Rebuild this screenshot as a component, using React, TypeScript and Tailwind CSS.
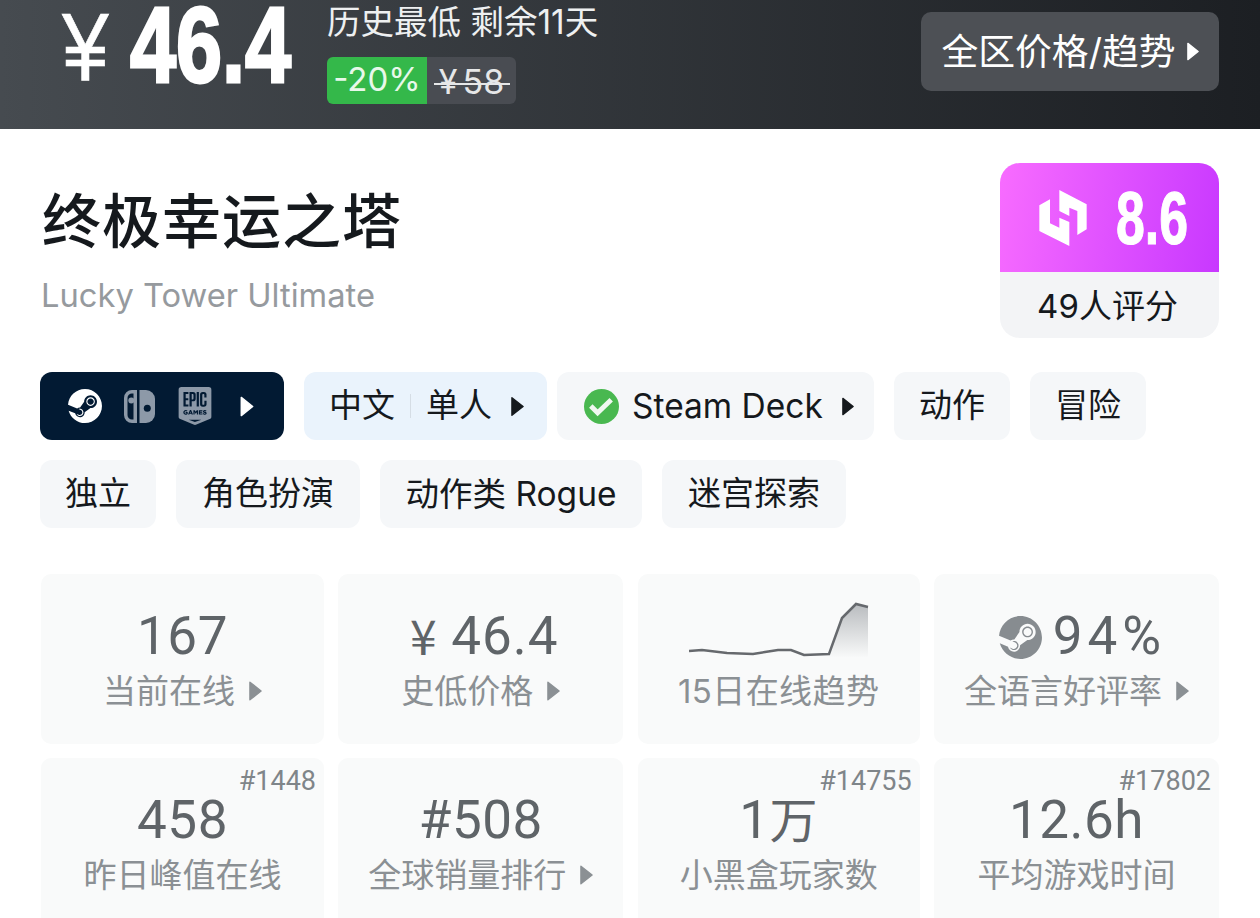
import React from "react";
import { SiSteam, SiEpicgames } from "react-icons/si";

const sans = "font-['Inter','Noto_Sans_CJK_SC',sans-serif]";
const num = "font-['Roboto','Noto_Sans_CJK_SC',sans-serif]";

function Tri({ className = "" }: { className?: string }) {
  return (
    <svg viewBox="0 0 14 22" className={className} fill="currentColor">
      <path d="M1 1.5 L13 11 L1 20.5 Z" stroke="currentColor" strokeWidth="1.5" strokeLinejoin="round" />
    </svg>
  );
}

function Tag({ children, width }: { children: React.ReactNode; width: string }) {
  return (
    <div className={`${width} h-[68px] flex items-center justify-center rounded-[12px] bg-[#f5f7f9] text-[33px] text-[#15191d]`}>
      {children}
    </div>
  );
}

function Card({
  value,
  label,
  arrow,
  rank,
  icon,
  gap = "gap-[14px]",
}: {
  value?: React.ReactNode;
  label: string;
  arrow?: boolean;
  rank?: string;
  icon?: React.ReactNode;
  gap?: string;
}) {
  return (
    <div className="relative h-[170px] rounded-[10px] bg-[#f9fafa] flex flex-col items-center pt-[30px]">
      {rank && <div className={`${num} absolute top-[6px] right-[8px] text-[27px] leading-[34px] text-[#7f8589]`}>{rank}</div>}
      <div className={`${num} ${gap} h-[66px] flex items-center text-[53px] text-[#5f6468] tracking-[0.5px]`}>
        {icon}
        {value}
      </div>
      <div className="flex items-center gap-[14px] text-[33px] leading-[44px] text-[#8b9094] mt-[-1px]">
        <span>{label}</span>
        {arrow && <Tri className="w-[13px] h-[22px] text-[#8b9094]" />}
      </div>
    </div>
  );
}

export default function App() {
  return (
    <div className={`${sans} w-[1260px] h-[918px] overflow-hidden bg-white`}>
      <header className="h-[129px] bg-gradient-to-r from-[#464b50] to-[#1c1f23] flex items-start pl-[62px] pr-[41px]">
        <span className="block w-[44px] mt-[12px] text-[80px] leading-[72px] text-white font-['Liberation_Sans'] origin-left scale-x-[1.05] scale-y-[1.2] [-webkit-text-stroke:0.5px_white]">
          ¥
        </span>
        <span className="block ml-[24px] w-[162px] mt-[1px] text-[72px] leading-[86px] font-bold text-white font-['Liberation_Sans'] origin-left scale-x-[1.15] scale-y-[1.5] whitespace-nowrap [-webkit-text-stroke:2px_white]">
          46.4
        </span>
        <div className="ml-[35px] flex flex-col items-start">
          <div className="text-[33.5px] leading-[40px] text-[#eef0f1] mt-[2px]">历史最低 剩余11天</div>
          <div className="flex h-[47px] mt-[15px] rounded-[6px] overflow-hidden text-[33px] leading-[44px]">
            <div className="w-[100px] bg-[#34b84a] text-[#e8f8ea] text-center">-20%</div>
            <div className="relative w-[89px] bg-[#494c52] text-[#e6e7e8] text-[34px] flex items-center justify-center gap-[5px] pt-[3px]">
              <span>¥</span>
              <span>58</span>
              <div className="absolute left-[7px] right-[6px] top-[26px] h-[2px] bg-[#e6e7e8]" />
            </div>
          </div>
        </div>
        <div className="ml-auto mt-[12px] w-[298px] h-[79px] rounded-[10px] bg-[#4d5055] flex items-center justify-center gap-[11px] text-[36.8px] text-white">
          <span>全区价格/趋势</span>
          <Tri className="w-[12px] h-[21px]" />
        </div>
      </header>

      <main className="pl-[40px] pr-[41px]">
        <section className="flex items-start justify-between pt-[34px]">
          <div className="pl-[2px]">
            <h1 className="text-[59px] leading-[72px] mt-[23px] font-medium text-[#15191d] tracking-[1px]">终极幸运之塔</h1>
            <p className="text-[32.7px] leading-[40px] mt-[17px] ml-[-1px] text-[#969a9e]">Lucky Tower Ultimate</p>
          </div>
          <div className="w-[219px] h-[175px] rounded-[20px] overflow-hidden bg-[#f3f4f6] flex flex-col">
            <div className="h-[109px] bg-[linear-gradient(100deg,#f86cff,#c838ff)] flex items-center justify-center gap-[29px] pl-[7px] text-white">
              <svg viewBox="28 22 142 168" className="w-[48px] h-[56px]" fill="#fff">
                <path d="M28 68 L60 50 L60 122 L88 135 L88 105 L118 118 L118 190 L28 145 Z" />
                <path d="M88 22 L170 65 L170 140 L142 157 L142 85 L118 75 L118 100 L88 85 Z" />
              </svg>
              <span className="block w-[72px] text-[64px] leading-[72px] font-bold font-['Liberation_Sans'] origin-left scale-x-[0.81] scale-y-[1.16] whitespace-nowrap [-webkit-text-stroke:1px_white]">
                8.6
              </span>
            </div>
            <div className="flex-1 flex items-center justify-center pt-[3px] pr-[4px] text-[33px] text-[#15191d]">49人评分</div>
          </div>
        </section>

        <section className="mt-[34px] flex flex-wrap gap-x-[20px] gap-y-[20px]">
          <div className="h-[68px] w-[244px] rounded-[12px] bg-[#021a33] flex items-center pl-[28px] text-white">
            <SiSteam className="w-[34px] h-[34px]" />
            <svg viewBox="0 0 31 33" className="w-[31px] h-[33px] ml-[22px] text-[#8d99a8]">
              <path d="M8 1.75 H11.25 V31.25 H8 A6.25 6.25 0 0 1 1.75 25 V8 A6.25 6.25 0 0 1 8 1.75 Z" fill="none" stroke="currentColor" strokeWidth="3.5" />
              <circle cx="7.3" cy="10.5" r="3" fill="currentColor" />
              <path d="M15.5 0 H22 A9 9 0 0 1 31 9 V24 A9 9 0 0 1 22 33 H15.5 Z" fill="currentColor" />
              <circle cx="23.3" cy="18.3" r="3.5" fill="#021a33" />
            </svg>
            <SiEpicgames className="w-[38px] h-[38px] ml-[21px] text-[#8d99a8]" />
            <Tri className="w-[14px] h-[21px] ml-[26px]" />
          </div>
          <div className="h-[68px] w-[243px] rounded-[12px] bg-[#eaf3fc] flex items-center pl-[25px] text-[33px] text-[#15191d]">
            <span>中文</span>
            <span className="w-[1px] h-[24px] bg-[#d5dde5] mx-[15px]" />
            <span>单人</span>
            <Tri className="w-[13px] h-[21px] ml-[19px]" />
          </div>
          <div className="h-[68px] w-[317px] ml-[-10px] rounded-[12px] bg-[#f5f7f9] flex items-center pl-[27px] text-[33.5px] text-[#15191d]">
            <svg viewBox="0 0 36 36" className="w-[35px] h-[35px]">
              <circle cx="18" cy="18" r="18" fill="#49b850" />
              <path d="M7 17.5 L14 24.5 L28 11" fill="none" stroke="#f0f8f0" strokeWidth="5" />
            </svg>
            <span className="ml-[13px]">Steam Deck</span>
            <Tri className="w-[12px] h-[21px] ml-[19px]" />
          </div>
          <Tag width="w-[116px]">动作</Tag>
          <Tag width="w-[116px]">冒险</Tag>
          <Tag width="w-[116px]">独立</Tag>
          <Tag width="w-[184px]">角色扮演</Tag>
          <Tag width="w-[262px]">
            <span className="text-[33.5px]">动作类 Rogue</span>
          </Tag>
          <Tag width="w-[184px]">迷宫探索</Tag>
        </section>

        <section className="mt-[46px] ml-[1px] grid grid-cols-[283px_285px_282px_285px] justify-between gap-y-[14px]">
          <Card value="167" label="当前在线" arrow />
          <Card
            value={<span className="tracking-[1px]">46.4</span>}
            label="史低价格"
            arrow
            icon={<span className="font-['Noto_Sans_CJK_SC'] text-[48px] mt-[-6px] ml-[7px]">¥</span>}
          />
          <div className="h-[170px] rounded-[10px] bg-[#f9fafa] flex flex-col items-center pt-[26px]">
            <svg viewBox="0 0 180 60" className="w-[180px] h-[60px] mb-[9px]">
              <defs>
                <linearGradient id="sp" x1="0" y1="0" x2="0" y2="1">
                  <stop offset="0" stopColor="#b9bcbf" />
                  <stop offset="1" stopColor="#f8f9f9" />
                </linearGradient>
              </defs>
              <path d="M140 54 L153 18 L167 4 L179 7 L179 57 L140 57 Z" fill="url(#sp)" />
              <path
                d="M0 51 L13 50 L38 53 L64 54 L76 52 L89 50 L102 50 L115 55 L140 54 L153 18 L167 4 L179 7"
                fill="none"
                stroke="#66696d"
                strokeWidth="2.5"
              />
            </svg>
            <div className="text-[33px] leading-[44px] text-[#8b9094] tracking-[0.4px]">15日在线趋势</div>
          </div>
          <Card
            value={<span className="tracking-[5px]">94%</span>}
            label="全语言好评率"
            arrow
            gap="gap-[11px]"
            icon={<SiSteam className="w-[43px] h-[43px] ml-[12px] text-[#878c90]" />}
          />
          <Card value="458" label="昨日峰值在线" rank="#1448" />
          <Card value="#508" label="全球销量排行" arrow />
          <Card
            value={
              <span>
                1<span className="text-[48px]">万</span>
              </span>
            }
            label="小黑盒玩家数"
            rank="#14755"
          />
          <Card value="12.6h" label="平均游戏时间" rank="#17802" />
        </section>
      </main>
    </div>
  );
}
